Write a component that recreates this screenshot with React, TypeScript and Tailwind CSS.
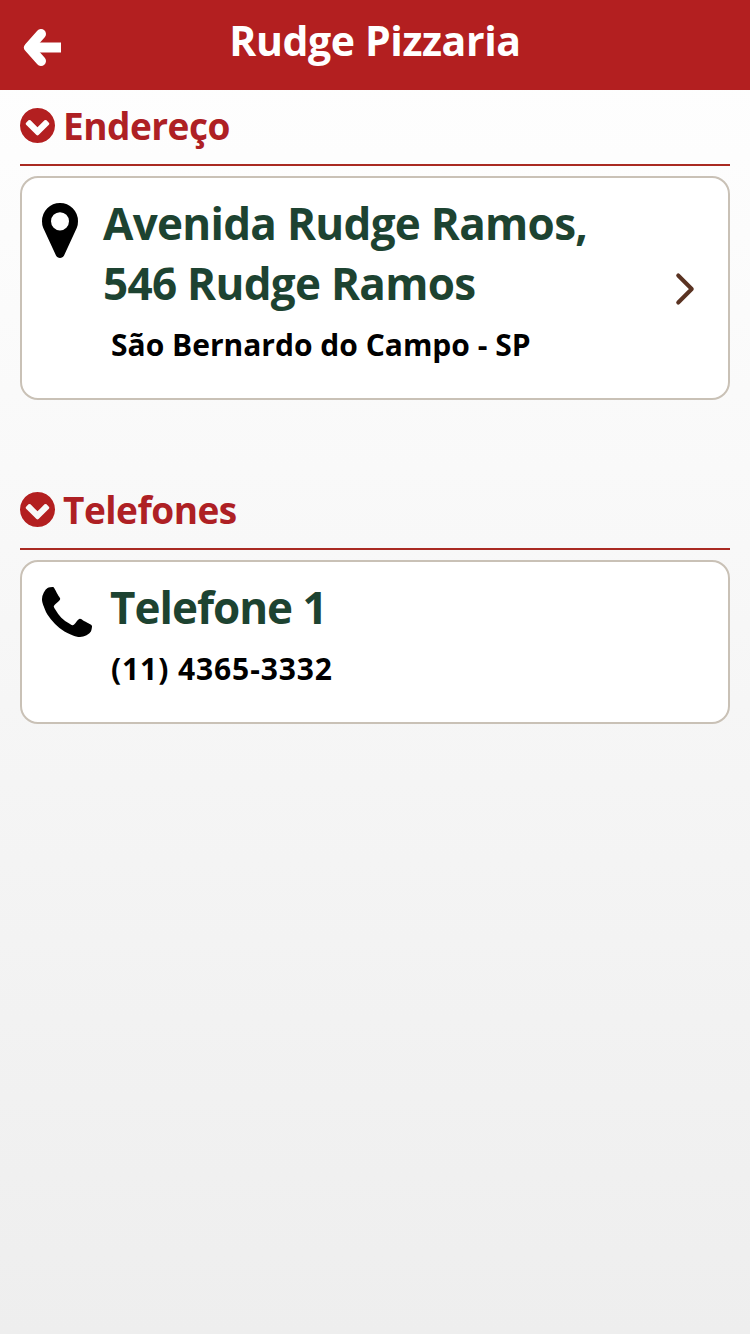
import { FiChevronRight } from "react-icons/fi";

const ChevronCircle = () => (
  <svg viewBox="0 0 1536 1536" className="w-[35px] h-[35px] shrink-0 fill-[#b31f20]">
    <path d="M813 1189l454-454q19-19 19-45t-19-45l-102-102q-19-19-45-19t-45 19l-307 307-307-307q-19-19-45-19t-45 19l-102 102q-19 19-19 45t19 45l454 454q19 19 45 19t45-19zm723-421q0 209-103 385.5t-279.5 279.5-385.5 103-385.5-103-279.5-279.5-103-385.5 103-385.5 279.5-279.5 385.5-103 385.5 103 279.5 279.5 103 385.5z" />
  </svg>
);

const SectionTitle = ({ title }: { title: string }) => (
  <div className="h-[76px] border-b-2 border-[#a92a22] flex items-start pt-[18px]">
    <ChevronCircle />
    <h2 className="ml-[8px] -mt-[1px] text-[37px] leading-[38px] font-bold tracking-[-0.5px] text-[#ae2024]">{title}</h2>
  </div>
);

const App = () => {
  return (
    <div className="min-h-[1334px] flex flex-col bg-gradient-to-b from-white to-[#eeeeee] font-['Open_Sans',sans-serif]">
      <header className="h-[90px] bg-[#b31f20] flex items-center justify-center relative">
        <svg viewBox="0 0 40 42" className="absolute left-[22px] top-[27px] w-[40px] h-[42px] fill-none stroke-white">
          <path d="M19 7 L7 20.5 L19 34" strokeWidth="10" strokeLinecap="round" strokeLinejoin="round" />
          <path d="M8 20.5 H39" strokeWidth="10" />
        </svg>
        <h1 className="text-[41px] leading-[80px] pb-[11px] font-bold tracking-[-0.4px] text-white">Rudge Pizzaria</h1>
      </header>

      <section className="px-5">
        <SectionTitle title="Endereço" />
        <div className="mt-[10px] h-[224px] border-2 border-[#c9c1b6] rounded-[18px] bg-white flex relative pl-[20px] pt-[25px]">
          <svg viewBox="0 0 1024 1536" preserveAspectRatio="none" className="w-[36px] h-[55px] fill-black shrink-0">
            <path d="M768 512q0-106-75-181t-181-75-181 75-75 181 75 181 181 75 181-75 75-181zm256 0q0 109-33 179l-364 774q-16 33-47.5 52t-67.5 19-67.5-19-46.5-52l-365-774q-33-70-33-179 0-212 150-362t362-150 362 150 150 362z" />
          </svg>
          <div className="ml-[25px]">
            <div className="text-[44px] leading-[60px] -mt-[10px] font-bold tracking-[-0.7px] text-[#1d4331]">
              Avenida Rudge Ramos,
              <br />
              546 Rudge Ramos
            </div>
            <div className="ml-2 mt-[12px] text-[30px] leading-[40px] font-bold text-black">São Bernardo do Campo - SP</div>
          </div>
          <FiChevronRight className="absolute right-[16px] top-[84px] w-[54px] h-[54px] text-[#5a3322] stroke-[1.8]" />
        </div>
      </section>

      <section className="px-5 mt-[74px]">
        <SectionTitle title="Telefones" />
        <div className="mt-[10px] h-[164px] border-2 border-[#c9c1b6] rounded-[18px] bg-white flex pl-[20px] pt-[25px]">
          <svg viewBox="0 0 1408 1408" className="w-[50px] h-[50px] fill-black shrink-0">
            <path d="M1408 1112q0 27-10 70.5t-21 68.5q-21 50-122 106-94 51-186 51-27 0-53-3.5t-57.5-12.5-47-14.5-55.5-20.5-49-18q-98-35-175-83-127-79-264-216t-216-264q-48-77-83-175-3-9-18-49t-20.5-55.5-14.5-47-12.5-57.5-3.5-53q0-92 51-186 56-101 106-122 25-11 68.5-21t70.5-10q14 0 21 3 18 6 53 76 11 19 30 54t35 63.5 31 53.5q3 4 17.5 25t21.5 35.5 7 28.5q0 20-28.5 50t-62 55-62 53-28.5 46q0 9 5 22.5t8.5 20.5 14 24 11.5 19q76 137 174 235t235 174q2 1 19 11.5t24 14 20.5 8.5 22.5 5q18 0 46-28.5t53-62 55-62 50-28.5q14 0 28.5 7t35.5 21.5 25 17.5q25 15 53.5 31t63.5 35 54 30q70 35 76 53 3 7 3 21z" />
          </svg>
          <div className="ml-[18px]">
            <div className="text-[44px] leading-[50px] -mt-[5px] font-bold tracking-[-1px] text-[#1d4331]">Telefone 1</div>
            <div className="ml-[1px] mt-[17px] text-[30px] leading-[40px] font-bold tracking-[0.9px] text-black">(11) 4365-3332</div>
          </div>
        </div>
      </section>
    </div>
  );
};

export default App;
